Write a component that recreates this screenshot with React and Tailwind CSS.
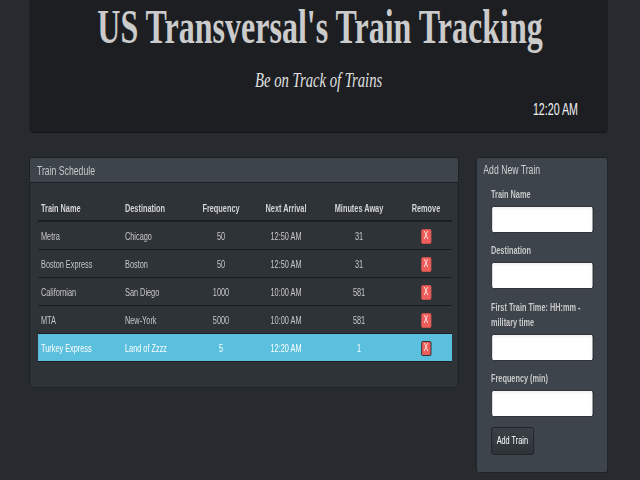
import React from 'react';

const trains = [
  { name: 'Metra', dest: 'Chicago', freq: '50', next: '12:50 AM', away: '31' },
  { name: 'Boston Express', dest: 'Boston', freq: '50', next: '12:50 AM', away: '31' },
  { name: 'Californian', dest: 'San Diego', freq: '1000', next: '10:00 AM', away: '581' },
  { name: 'MTA', dest: 'New-York', freq: '5000', next: '10:00 AM', away: '581' },
  { name: 'Turkey Express', dest: 'Land of Zzzz', freq: '5', next: '12:20 AM', away: '1', active: true },
];

function Field({ label }) {
  return (
    <div className="mb-[10.5px] w-[153px]">
      <label className="block mb-[4px] text-[11px] leading-[15px] font-bold text-[#c8c8c8]">{label}</label>
      <input className="block w-[153px] h-[27px] bg-white border border-[#1c1e22] rounded-[3px] shadow-inner" />
    </div>
  );
}

export default function App() {
  return (
    <div className="min-h-[480px] w-full overflow-hidden bg-[#272b30] font-['Liberation_Sans',Arial,sans-serif] text-[#c8c8c8]">
      {/* page was captured at 960px wide and squeezed to 640 */}
      <div className="w-[960px] origin-top-left scale-x-[0.666667] pl-[44px] pr-[48px]">
        <div className="h-[133px] bg-[#1c1e22] rounded-b-[6px] border-b border-[#141518] pt-[3px]">
          <h1 className="pl-[4px] text-center font-['Liberation_Serif',serif] font-bold text-[48px] leading-[48px] text-[#cbcbcb]">
            US Transversal's Train Tracking
          </h1>
          <p className="mt-[15.5px] text-center font-['Liberation_Serif',serif] italic text-[22px] leading-[26px] text-[#e0e0e0]">
            Be on Track of Trains
          </p>
          <div className="mt-[7px] pr-[45px] text-right text-[16px] leading-[20px] text-[#f2f2f2]">12:20 AM</div>
        </div>

        <div className="mt-[24px] flex items-start gap-[26px]">
          <div className="w-[644px] border border-[#1c1e22] rounded-[4px] overflow-hidden bg-[#2e3338]">
            <div className="h-[25px] bg-[#3e444c] border-b border-[#1c1e22] px-[10.5px] text-[13px] leading-[25px] text-[#c8c8c8]">
              Train Schedule
            </div>
            <div className="pt-[10px] pb-[25px] pl-[12px] pr-[9px]">
              <table className="w-[621px] table-fixed border-separate border-spacing-0 text-[11px]">
                <colgroup>
                  <col className="w-[126px]" />
                  <col className="w-[105px]" />
                  <col className="w-[87px]" />
                  <col className="w-[108px]" />
                  <col className="w-[111px]" />
                  <col className="w-[84px]" />
                </colgroup>
                <thead>
                  <tr className="font-bold text-[#d4d4d4]">
                    <th className="text-left pl-[4.5px] pt-[5px] pb-[2px] leading-[20px] border-b-2 border-[#1c1e22]">Train Name</th>
                    <th className="text-left pl-[4.5px] pt-[5px] pb-[2px] leading-[20px] border-b-2 border-[#1c1e22]">Destination</th>
                    <th className="text-center pt-[5px] pb-[2px] leading-[20px] border-b-2 border-[#1c1e22]">Frequency</th>
                    <th className="text-center pt-[5px] pb-[2px] leading-[20px] border-b-2 border-[#1c1e22]">Next Arrival</th>
                    <th className="text-center pt-[5px] pb-[2px] leading-[20px] border-b-2 border-[#1c1e22]">Minutes Away</th>
                    <th className="text-center pl-[6px] pt-[5px] pb-[2px] leading-[20px] border-b-2 border-[#1c1e22]">Remove</th>
                  </tr>
                </thead>
                <tbody>
                  {trains.map(t => {
                    const cell = 'pt-[4px] pb-[3px] leading-[20px] border-b border-[#1c1e22]';
                    return (
                      <tr key={t.name} className={t.active ? 'bg-[#5bc0de] text-white' : ''}>
                        <td className={`text-left pl-[4.5px] ${cell}`}>{t.name}</td>
                        <td className={`text-left pl-[4.5px] ${cell}`}>{t.dest}</td>
                        <td className={`text-center ${cell}`}>{t.freq}</td>
                        <td className={`text-center ${cell}`}>{t.next}</td>
                        <td className={`text-center ${cell}`}>{t.away}</td>
                        <td className={`pl-[6px] ${cell}`}>
                          <div className="flex h-[20px] items-center justify-center">
                            <button className={`flex h-[15px] w-[15px] items-center justify-center rounded-[2px] bg-[#ee5f5b] text-[10px] leading-none text-white border ${t.active ? 'border-[#1c1e22]' : 'border-[#d9534f]'}`}>
                              X
                            </button>
                          </div>
                        </td>
                      </tr>
                    );
                  })}
                </tbody>
              </table>
            </div>
          </div>

          <div className="w-[198px] h-[316px] bg-[#3e444c] border border-[#1c1e22] rounded-[4px] pt-[3px]">
            <div className="px-[10px] text-[13px] leading-[18px] text-[#d0d0d0]">Add New Train</div>
            <form className="mt-[7.5px] pl-[21.5px]" onSubmit={e => e.preventDefault()}>
              <Field label="Train Name" />
              <Field label="Destination" />
              <Field label="First Train Time: HH:mm - military time" />
              <div className="w-[153px]">
                <label className="block mb-[4px] text-[11px] leading-[15px] font-bold text-[#c8c8c8]">Frequency (min)</label>
                <input className="block w-[153px] h-[27px] bg-white border border-[#1c1e22] rounded-[3px] shadow-inner" />
              </div>
              <button className="mt-[9.5px] h-[28px] w-[64px] rounded-[3px] border border-[#1c1e22] bg-gradient-to-b from-[#3c4147] to-[#2e3338] text-[11px] text-white">
                Add Train
              </button>
            </form>
          </div>
        </div>
      </div>
    </div>
  );
}
